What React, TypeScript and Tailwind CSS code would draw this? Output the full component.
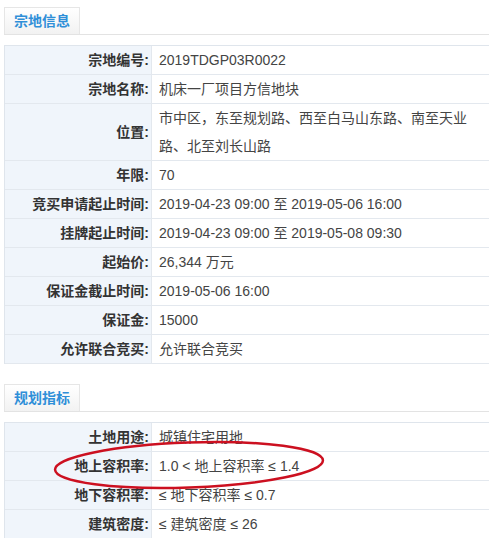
import React from "react";

type Row = { label: string; value: React.ReactNode };

const landRows: Row[] = [
  { label: "宗地编号:", value: "2019TDGP03R0022" },
  { label: "宗地名称:", value: "机床一厂项目方信地块" },
  {
    label: "位置:",
    value: (
      <>
        市中区，东至规划路、西至白马山东路、南至天业
        <br />
        路、北至刘长山路
      </>
    ),
  },
  { label: "年限:", value: "70" },
  { label: "竞买申请起止时间:", value: "2019-04-23 09:00 至 2019-05-06 16:00" },
  { label: "挂牌起止时间:", value: "2019-04-23 09:00 至 2019-05-08 09:30" },
  { label: "起始价:", value: "26,344 万元" },
  { label: "保证金截止时间:", value: "2019-05-06 16:00" },
  { label: "保证金:", value: "15000" },
  { label: "允许联合竞买:", value: "允许联合竞买" },
];

const planRows: Row[] = [
  { label: "土地用途:", value: "城镇住宅用地" },
  { label: "地上容积率:", value: "1.0 < 地上容积率 ≤ 1.4" },
  { label: "地下容积率:", value: "≤ 地下容积率 ≤ 0.7" },
  { label: "建筑密度:", value: "≤ 建筑密度 ≤ 26" },
];

function SectionTab({ title }: { title: string }) {
  return (
    <div className="border-b border-[#e3e3e3]">
      <div className="w-[76px] h-[27px] border border-b-0 border-[#e6e6e6] bg-gradient-to-b from-white to-[#f2f2f2] text-center text-[14px] font-bold leading-[26px] text-[#2f8fd8]">
        {title}
      </div>
    </div>
  );
}

function InfoTable({ rows }: { rows: Row[] }) {
  return (
    <div className="mt-[10px] border-t border-l border-[#dfe5ec]">
      {rows.map((r) => (
        <div key={r.label} className="flex border-b border-[#e3e8ee] text-[14px] leading-[28px]">
          <div className="w-[147px] shrink-0 flex items-center justify-end bg-[#f0f5fb] border-r border-[#e3e8ee] pr-[2px] font-bold text-[#333]">
            {r.label}
          </div>
          <div className="flex-1 pl-[7px] text-[#444]">{r.value}</div>
        </div>
      ))}
    </div>
  );
}

export default function App() {
  return (
    <div
      className="relative w-[489px] h-[538px] overflow-hidden bg-white pl-[4px] pt-[7px]"
      style={{ fontFamily: '"Liberation Sans", "Noto Sans CJK SC", sans-serif' }}
    >
      <SectionTab title="宗地信息" />
      <InfoTable rows={landRows} />

      <div className="mt-[20px]">
        <SectionTab title="规划指标" />
        <InfoTable rows={planRows} />
      </div>

      {/* hand-drawn annotation */}
      <svg className="absolute left-0 top-0 pointer-events-none" width="489" height="538">
        <ellipse
          cx="189"
          cy="465"
          rx="134"
          ry="22.5"
          transform="rotate(-2 189 465)"
          fill="none"
          stroke="#cc1020"
          strokeWidth="2.5"
        />
      </svg>
    </div>
  );
}
